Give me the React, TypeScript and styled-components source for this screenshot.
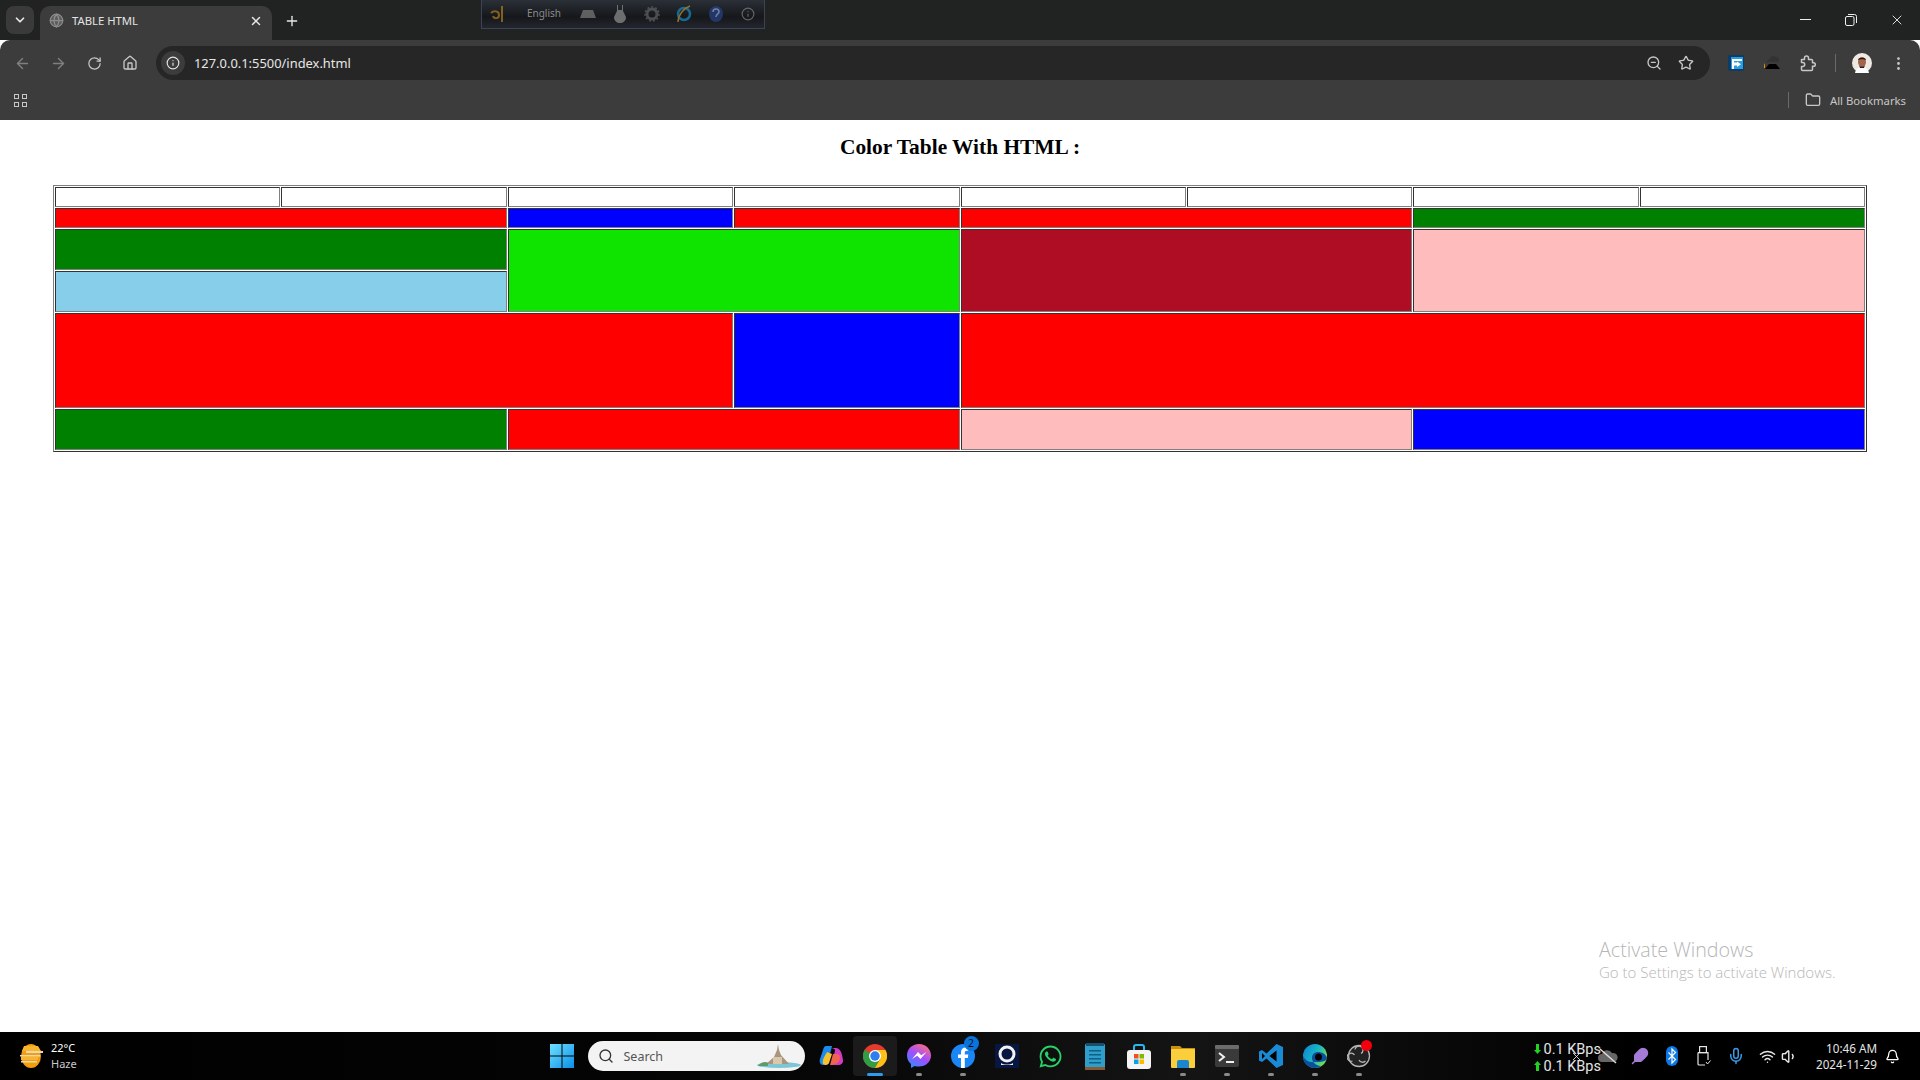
import React from "react";
import styled, { createGlobalStyle } from "styled-components";
import {
  ArrowLeft,
  ArrowRight,
  Bell,
  ChevronDown,
  Feather,
  Folder,
  Globe,
  Home,
  Info,
  Mic,
  MoreVertical,
  Plus,
  RotateCw,
  Search,
  Star,
  Volume1,
  Wifi,
  X,
  ZoomOut,
} from "lucide-react";
import { FaWhatsapp } from "react-icons/fa";

const GlobalStyle = createGlobalStyle`
  html, body {
    margin: 0;
    padding: 0;
    background: #fff;
  }
  * {
    box-sizing: border-box;
  }
`;

const Screen = styled.div`
  width: 1920px;
  height: 1080px;
  display: flex;
  flex-direction: column;
  overflow: hidden;
  position: relative;
  font-family: "Noto Sans", "Open Sans", sans-serif;
`;

/* browser window */
const TabStrip = styled.div`
  height: 40px;
  flex: none;
  background: #212322;
  display: flex;
  align-items: flex-end;
  padding-left: 6px;
  color: #e8e8e8;
`;
const TabMenu = styled.div`
  width: 28px;
  height: 28px;
  margin-bottom: 6px;
  border-radius: 8px;
  background: #3a3a3a;
  display: flex;
  align-items: center;
  justify-content: center;
`;
const Tab = styled.div`
  width: 232px;
  height: 34px;
  margin-left: 6px;
  padding: 0 9px 5px 9px;
  border-radius: 10px 10px 0 0;
  background: #3c3c3c;
  display: flex;
  align-items: center;
  gap: 8px;
`;
const TabTitle = styled.span`
  flex: 1;
  font-size: 11.3px;
  color: #e3e3e3;
`;
const NewTab = styled.div`
  width: 38px;
  height: 34px;
  margin-left: 1px;
  padding-bottom: 5px;
  display: flex;
  align-items: center;
  justify-content: center;
`;
const WindowButtons = styled.div`
  margin-left: auto;
  height: 40px;
  display: flex;
  align-items: center;
`;
const WindowButton = styled.div`
  width: 46px;
  height: 40px;
  display: flex;
  align-items: center;
  justify-content: center;
`;

const ImeBar = styled.div`
  position: absolute;
  left: 481px;
  top: 0;
  width: 284px;
  height: 29px;
  background: linear-gradient(#2b3038, #15171a 60%, #23262e);
  border: 1px solid #3c4354;
  border-top: none;
  display: flex;
  align-items: center;
  color: #8b8b8b;
`;
const ImeLang = styled.span`
  font-size: 10px;
  width: 44px;
  text-align: center;
  margin: -3px 6px 0 8px;
`;
const ImeIcon = styled.span`
  width: 32px;
  display: flex;
  justify-content: center;
  opacity: 0.75;
`;

const Toolbar = styled.div`
  height: 48px;
  flex: none;
  background: #3c3c3c;
  border-radius: 10px 10px 0 0;
  display: flex;
  align-items: center;
  padding: 0 0 2px 4px;
  color: #c7c7c7;
`;
const NavButton = styled.div<{ $dim?: boolean }>`
  width: 36px;
  display: flex;
  justify-content: center;
  color: ${({ $dim }) => ($dim ? "#7f7f7f" : "#c7c7c7")};
`;
const AddressBar = styled.div`
  width: 1554px;
  height: 34px;
  margin-left: 8px;
  border-radius: 17px;
  background: #262626;
  display: flex;
  align-items: center;
  padding: 0 8px 0 5px;
`;
const InfoChip = styled.div`
  width: 24px;
  height: 24px;
  border-radius: 50%;
  background: #3c3c3c;
  display: flex;
  align-items: center;
  justify-content: center;
  color: #e3e3e3;
`;
const Url = styled.span`
  flex: 1;
  margin-left: 9px;
  font-size: 12.9px;
  color: #e6e6e6;
`;
const AddressAction = styled.div`
  width: 32px;
  display: flex;
  justify-content: center;
`;
const ExtensionRow = styled.div`
  display: flex;
  align-items: center;
  margin-left: 8px;
`;
const ExtensionButton = styled.div<{ $gap?: number }>`
  width: 36px;
  margin-left: ${({ $gap }) => $gap || 0}px;
  display: flex;
  justify-content: center;
`;
const Divider = styled.div<{ $h: number; $gap?: number }>`
  width: 1px;
  height: ${({ $h }) => $h}px;
  margin-left: ${({ $gap }) => $gap || 0}px;
  background: #6a6a6a;
`;

const BookmarksBar = styled.div`
  height: 32px;
  flex: none;
  background: #3c3c3c;
  display: flex;
  align-items: center;
  padding: 0 14px 8px 12px;
  color: #c7c7c7;
`;
const AppsIcon = styled.div`
  display: grid;
  grid-template-columns: 5px 5px;
  gap: 3px;
  margin-left: 2px;
`;
const AppsDot = styled.span`
  width: 5px;
  height: 5px;
  border: 1px solid #c7c7c7;
`;
const BookmarksEnd = styled.div`
  margin-left: auto;
  display: flex;
  align-items: center;
  gap: 16px;
`;
const BookmarkFolder = styled.div`
  display: flex;
  align-items: center;
  gap: 9px;
`;
const BookmarksLabel = styled.span`
  font-size: 11.3px;
  color: #c7c7c7;
`;

/* page */
const Page = styled.main`
  flex: 1;
  background: #fff;
  padding: 16px 53px 0;
  position: relative;
`;
const Heading = styled.h2`
  margin: 0 0 27px;
  height: 22px;
  line-height: 22px;
  text-align: center;
  font-family: "Liberation Serif", "Times New Roman", serif;
  font-size: 21.4px;
  font-weight: bold;
  color: #000;
`;
const ColorTable = styled.table`
  width: 1814px;
  table-layout: fixed;
  border-collapse: separate;
  border-spacing: 1px;
  border: 1px solid;
  border-color: #808080 #333 #333 #808080;
`;
const Row = styled.tr<{ $h: number }>`
  height: ${({ $h }) => $h}px;
`;
const Cell = styled.td<{ $bg?: string }>`
  padding: 0;
  border: 1px solid;
  border-color: #333 #808080 #808080 #333;
  background: ${({ $bg }) => $bg || "#fff"};
`;
const Watermark = styled.div`
  position: absolute;
  left: 1599px;
  top: 817px;
  font-family: "Open Sans", sans-serif;
  font-weight: 300;
  color: #b6b6b6;
`;
const WatermarkTitle = styled.div`
  font-size: 19.7px;
  line-height: 26px;
`;
const WatermarkText = styled.div`
  font-size: 15px;
  line-height: 19px;
  white-space: nowrap;
`;

/* taskbar */
const Taskbar = styled.footer`
  height: 48px;
  flex: none;
  background: linear-gradient(90deg, #000 0%, #050505 40%, #141414 62%, #000 85%);
  display: grid;
  grid-template-columns: 1fr auto 1fr;
  align-items: center;
  color: #fff;
`;
const Weather = styled.div`
  display: flex;
  align-items: center;
  padding-left: 18px;
  gap: 7px;
`;
const WeatherText = styled.div`
  font-size: 11px;
  line-height: 16px;
`;
const WeatherSub = styled.div`
  color: #c9c9c9;
`;
const TaskCenter = styled.div`
  display: flex;
  align-items: center;
`;
const SearchBox = styled.div`
  width: 217px;
  height: 30px;
  margin: 0 4px;
  border-radius: 15px;
  background: #f3f3f3;
  color: #333;
  display: flex;
  align-items: center;
  padding: 0 3px 0 10px;
  gap: 10px;
`;
const SearchLabel = styled.span`
  flex: 1;
  font-size: 12.5px;
  color: #555;
`;
const TaskIcon = styled.div<{ $active?: boolean; $dot?: boolean }>`
  width: 44px;
  height: 40px;
  border-radius: 4px;
  position: relative;
  display: flex;
  align-items: center;
  justify-content: center;
  background: ${({ $active }) => ($active ? "#1b1b1b" : "transparent")};
  &::after {
    content: "";
    display: ${({ $dot, $active }) => ($dot || $active ? "block" : "none")};
    position: absolute;
    bottom: 0;
    left: 50%;
    transform: translateX(-50%);
    width: ${({ $active }) => ($active ? 16 : 6)}px;
    height: 3px;
    border-radius: 2px;
    background: ${({ $active }) => ($active ? "#2f9bf0" : "#8a8a8a")};
  }
`;
const CountBadge = styled.span`
  position: absolute;
  top: 0;
  right: 6px;
  width: 15px;
  height: 15px;
  border-radius: 50%;
  background: #0a74dc;
  color: #111;
  font-size: 10.5px;
  line-height: 15px;
  text-align: center;
`;
const RecordDot = styled.span`
  position: absolute;
  top: 4px;
  right: 9px;
  width: 11px;
  height: 11px;
  border-radius: 50%;
  background: #f4000c;
`;
const Tray = styled.div`
  display: flex;
  align-items: center;
  justify-content: flex-end;
`;
const NetSpeed = styled.div`
  position: relative;
  display: flex;
  flex-direction: column;
  padding-top: 3px;
  font-family: Roboto, sans-serif;
  font-size: 14.5px;
  line-height: 17px;
  color: #e4e4e4;
  margin-right: -9px;
`;
const NetLine = styled.div`
  display: flex;
  align-items: center;
  gap: 3px;
  white-space: nowrap;
`;
const NetCursor = styled.span`
  position: absolute;
  left: 36px;
  top: 12px;
  display: flex;
  color: #f2f2f2;
`;
const TrayIcon = styled.div<{ $w?: number; $color?: string }>`
  width: ${({ $w }) => $w || 32}px;
  display: flex;
  justify-content: center;
  color: ${({ $color }) => $color || "#e6e6e6"};
  & > svg {
    flex: none;
  }
`;
const Clock = styled.div`
  font-size: 11.7px;
  line-height: 16px;
  text-align: right;
  color: #e6e6e6;
  margin-left: 20px;
`;
const BellWrap = styled.div`
  width: 30px;
  margin-right: 13px;
  display: flex;
  justify-content: center;
`;

const Arrow = ({ up }: { up?: boolean }) => (
  <svg width="7" height="10" viewBox="0 0 7 10">
    <path
      d={up ? "M3.5 0 7 4H5v6H2V4H0z" : "M3.5 10 7 6H5V0H2v6H0z"}
      fill="#1fd31f"
    />
  </svg>
);

const Restore = () => (
  <svg width="12" height="12" viewBox="0 0 12 12" fill="none" stroke="#eee">
    <rect x="0.5" y="2.5" width="8.5" height="9" rx="1.5" />
    <path d="M3 .5h6.5a2 2 0 0 1 2 2V9" />
  </svg>
);

const MinimizeIcon = () => (
  <svg width="11" height="2" viewBox="0 0 11 2">
    <rect width="11" height="1" fill="#eee" />
  </svg>
);

const ForwardExt = () => (
  <svg width="16" height="16" viewBox="0 0 16 16">
    <rect width="16" height="16" rx="2" fill="#0d3c66" />
    <rect x="3" y="2" width="12" height="12" fill="#2a9ee0" />
    <path d="M4 4h10v2H6v1.5h3v-1l4 2.8-4 2.8v-1.6H6V14H4z" fill="#fff" />
  </svg>
);

const CapExt = () => (
  <svg width="16" height="16" viewBox="0 0 16 16">
    <path d="M1 8 8 1l7 2v4H1z" fill="#333" />
    <path d="M0 8v5h1v-3z" fill="#f08a00" />
    <path d="M1 14 5 9h7l4 5z" fill="#000" />
  </svg>
);

const ExtensionsIcon = () => (
  <svg width="17" height="17" viewBox="0 0 17 17" fill="none" stroke="#c7c7c7" strokeWidth="1.500" strokeLinejoin="round">
    <path d="M1.500 4.500h3V3a2 2 0 0 1 4 0v1.500h3a1 1 0 0 1 1 1v2.200h1a1.800 1.800 0 0 1 0 3.600h-1v3.200a1 1 0 0 1-1 1h-9a1 1 0 0 1-1-1v-3h1.200a2 2 0 0 0 0-4H1.500z" />
  </svg>
);

const Avatar = () => (
  <svg width="20" height="20" viewBox="0 0 20 20">
    <circle cx="10" cy="10" r="10" fill="#efe9e4" />
    <path d="M3 20c1-5 4-6 7-6s6 1 7 6z" fill="#fff" />
    <ellipse cx="10" cy="9" rx="4" ry="5" fill="#a5654c" />
    <path d="M6 7c0-3 8-3 8 0-2-1-6-1-8 0z" fill="#231815" />
    <path d="M7 12c1 2 5 2 6 0l-1 3H8z" fill="#2c1d18" />
  </svg>
);

const WeatherIcon = () => (
  <svg width="26" height="26" viewBox="0 0 26 26">
    <ellipse cx="13" cy="13" rx="10" ry="12" fill="#f59e0b" />
    <path d="M6 3h14l3 5H4zM3 14h17v3H3z" fill="#f7b42c" />
    <path d="M8 8h17v2H8zM2 12h20v1.500H2zM3 18h16v1.500H3z" fill="#ead8b4" />
  </svg>
);

const WindowsLogo = () => (
  <svg width="24" height="24" viewBox="0 0 24 24">
    <defs>
      <linearGradient id="win" x1="0" y1="0" x2="1" y2="1">
        <stop offset="0" stopColor="#6fe0ff" />
        <stop offset="1" stopColor="#0a8fe8" />
      </linearGradient>
    </defs>
    <path d="M0 0h11.500v11.500H0zM12.500 0H24v11.500H12.500zM0 12.500h11.500V24H0zM12.500 12.500H24V24H12.500z" fill="url(#win)" />
  </svg>
);

const SearchThumb = () => (
  <svg width="50" height="28" viewBox="0 0 50 28">
    <ellipse cx="27" cy="23" rx="22" ry="3" fill="#7cc7d3" />
    <path d="M14 22 22 15l3-7 1-6 1 6 2 5 8 9z" fill="#a9967e" />
    <path d="M6 24c3-4 7-5 10-3v3z" fill="#5f9a6a" />
    <path d="M21 15h9v7h-9z" fill="#d9c8ad" />
  </svg>
);

const CopilotIcon = () => (
  <svg width="24" height="24" viewBox="0 0 24 24">
    <path d="M7 2h6l-4 16c-.5 2-2 3-3.500 3H4c-2.500 0-4-3-3-6l3-9c.6-2 1.500-4 3-4z" fill="#1a8cf0" />
    <path d="M4 20c-1-5 2-8 4-12l5 2-3 9c-.5 1.500-3 3-6 1z" fill="#f6c22e" />
    <path d="M11 4h6c3 0 5 3 6 7l1 5c.5 3-2 5-4 5h-8l4-14c.3-1.500-1-3-5-3z" fill="#d13cc2" />
    <path d="M14 10h4c2 0 3 2 3 4 0 3-3 7-10 7z" fill="#f0634f" />
  </svg>
);

const ChromeIcon = () => (
  <svg width="24" height="24" viewBox="0 0 24 24">
    <circle cx="12" cy="12" r="12" fill="#e33b2e" />
    <path d="M1.600 6A12 12 0 0 0 12 24l5.200-9L12 12z" fill="#2f9e44" />
    <path d="M22.400 6A12 12 0 0 1 12 24l5.200-9L12 6z" fill="#fbc116" />
    <circle cx="12" cy="12" r="6" fill="#fff" />
    <circle cx="12" cy="12" r="4.700" fill="#2f7df0" />
  </svg>
);

const MessengerIcon = () => (
  <svg width="24" height="24" viewBox="0 0 24 24">
    <defs>
      <linearGradient id="msg" x1="0.2" y1="1" x2="0.8" y2="0">
        <stop offset="0" stopColor="#2f8cff" />
        <stop offset="0.5" stopColor="#a24dff" />
        <stop offset="1" stopColor="#ff6f7d" />
      </linearGradient>
    </defs>
    <path d="M12 0C5 0 0 5 0 11.500c0 3.500 1.500 6.500 4 8.500v4l3.700-2c1.300.4 2.800.6 4.300.6 7 0 12-5 12-11.100S19 0 12 0z" fill="url(#msg)" />
    <path d="m5 15 6-7 3.200 3.200L19.500 8l-6 7-3.300-3.200z" fill="#fff" />
  </svg>
);

const FacebookIcon = () => (
  <svg width="24" height="24" viewBox="0 0 24 24">
    <circle cx="12" cy="12" r="12" fill="#1b86f5" />
    <path d="M13.800 24V14h3l.5-3.500h-3.500V8.500c0-1 .5-1.800 2-1.800h1.600V3.600c-1-.1-1.800-.2-2.700-.2-2.900 0-4.700 1.700-4.700 4.800v2.300H7V14h3v10z" fill="#fff" />
  </svg>
);

const CamIcon = () => (
  <svg width="24" height="24" viewBox="0 0 24 24">
    <rect width="24" height="24" fill="#071742" />
    <circle cx="12" cy="10" r="7" fill="none" stroke="#f3f3f3" strokeWidth="3" />
    <path d="M6 19c3 2 9 2 12 0v2H6z" fill="#e6e6e6" />
  </svg>
);

const NotepadIcon = () => (
  <svg width="20" height="27" viewBox="0 0 20 27">
    <rect y="1" width="20" height="26" rx="1" fill="#2f9ecb" />
    <rect y="24" width="20" height="3" fill="#8a5a34" />
    <path d="M1 0h18v3H1z" fill="#16506e" />
    <path d="M4 7h12v1.500H4zM4 11h12v1.500H4zM4 15h12v1.500H4zM4 19h12v1.500H4z" fill="#0f5f86" />
  </svg>
);

const StoreIcon = () => (
  <svg width="24" height="26" viewBox="0 0 24 26">
    <path d="M7 8V4a2 2 0 0 1 2-2h6a2 2 0 0 1 2 2v4" fill="none" stroke="#29b6f0" strokeWidth="2" />
    <rect y="7" width="24" height="19" rx="3" fill="#f4f4f4" />
    <rect x="7" y="11" width="4.500" height="4.500" fill="#f25022" />
    <rect x="12.500" y="11" width="4.500" height="4.500" fill="#7fba00" />
    <rect x="7" y="16.500" width="4.500" height="4.500" fill="#00a4ef" />
    <rect x="12.500" y="16.500" width="4.500" height="4.500" fill="#ffb900" />
  </svg>
);

const ExplorerIcon = () => (
  <svg width="24" height="24" viewBox="0 0 24 24">
    <path d="M0 2h9l2 2h13v4H0z" fill="#c98f10" />
    <rect y="5" width="24" height="19" rx="1" fill="#fbcf3c" />
    <path d="M6 24v-6a2 2 0 0 1 2-2h8a2 2 0 0 1 2 2v6z" fill="#1a86d0" />
  </svg>
);

const TerminalIcon = () => (
  <svg width="24" height="22" viewBox="0 0 24 22">
    <rect width="24" height="22" rx="2" fill="#3a3a3a" />
    <rect width="24" height="4" rx="1" fill="#6b6b6b" />
    <path d="m4 8 5 4-5 4" fill="none" stroke="#f2f2f2" strokeWidth="2" />
    <rect x="11" y="16" width="8" height="2" fill="#f2f2f2" />
  </svg>
);

const VsCodeIcon = () => (
  <svg width="24" height="24" viewBox="0 0 24 24">
    <path d="M17.500 0 24 3v18l-6.500 3-10-9.500L3 18l-3-1.500v-9L3 6l4.500 3.500z" fill="#1a8ad4" />
    <path d="M17.500 6.500 10.500 12l7 5.500zM3 9v6l3-3z" fill="#000" />
  </svg>
);

const EdgeIcon = () => (
  <svg width="24" height="24" viewBox="0 0 24 24">
    <defs>
      <linearGradient id="edge" x1="0" y1="0" x2="1" y2="0.500">
        <stop offset="0" stopColor="#0c82d8" />
        <stop offset="0.600" stopColor="#19b6c4" />
        <stop offset="1" stopColor="#6fdc58" />
      </linearGradient>
    </defs>
    <circle cx="12" cy="12" r="12" fill="url(#edge)" />
    <path d="M24 14c-1-4-5-6-9-6-3 0-6 2-6 6 0 4 4 8 9 8-2 1-4 2-6 2C5 24 0 19 0 12c2 4 5 6 9 6h6c4 0 9-1 9-4z" fill="#0c4f9c" />
    <circle cx="15.500" cy="13" r="3.500" fill="#000" />
  </svg>
);

const ObsIcon = () => (
  <svg width="24" height="24" viewBox="0 0 24 24" fill="none" stroke="#b5b5b5" strokeWidth="1.300">
    <circle cx="12" cy="12" r="10.500" fill="#222" />
    <path d="M8 5.500a4 4 0 1 1 6 4M5.500 17a4 4 0 1 1 2-6M18.500 17a4 4 0 0 1-6.500-1" />
  </svg>
);

const CloudOff = () => (
  <svg width="20" height="16" viewBox="0 0 20 16">
    <path d="M4 14a4 4 0 0 1 0-8 5.500 5.500 0 0 1 10-1 4.500 4.500 0 0 1 2 9z" fill="#666" />
    <path d="M2 1 18 15" stroke="#ddd" strokeWidth="1.500" />
  </svg>
);

const BluetoothIcon = () => (
  <svg width="12" height="20" viewBox="0 0 12 20">
    <rect width="12" height="20" rx="6" fill="#0a78e6" />
    <path d="m2.500 6.500 7 7L6 17V3l3.500 3.500-7 7" fill="none" stroke="#fff" strokeWidth="1.200" />
  </svg>
);

const DriveIcon = () => (
  <svg width="14" height="20" viewBox="0 0 14 20" fill="none" stroke="#e6e6e6" strokeWidth="1.200">
    <rect x="2.600" y="0.600" width="6.800" height="6" />
    <path d="M1 6.600h10V14M1 6.600V18a1 1 0 0 0 1 1h6" />
    <path d="m9 16 1.500 2 3-3.500" strokeWidth="1" />
  </svg>
);

const taskApps = [
  { key: "copilot", icon: <CopilotIcon /> },
  { key: "chrome", icon: <ChromeIcon />, active: true },
  { key: "messenger", icon: <MessengerIcon />, dot: true },
  { key: "facebook", icon: <FacebookIcon />, dot: true, badge: "2" },
  { key: "cam", icon: <CamIcon /> },
  { key: "whatsapp", icon: <FaWhatsapp size={25} color="#25d366" /> },
  { key: "notepad", icon: <NotepadIcon /> },
  { key: "store", icon: <StoreIcon /> },
  { key: "explorer", icon: <ExplorerIcon />, dot: true },
  { key: "terminal", icon: <TerminalIcon />, dot: true },
  { key: "vscode", icon: <VsCodeIcon />, dot: true },
  { key: "edge", icon: <EdgeIcon />, dot: true },
  { key: "obs", icon: <ObsIcon />, dot: true, record: true },
];

const RED = "#ff0000";
const BLUE = "#0000ff";
const GREEN = "#008000";
const LIME = "#0fe400";
const CRIMSON = "#ae0d23";
const PINK = "#ffbcbc";
const SKY = "#87ceeb";

export default function App() {
  return (
    <Screen>
      <GlobalStyle />
      <TabStrip>
        <TabMenu>
          <ChevronDown size={14} strokeWidth={3} />
        </TabMenu>
        <Tab>
          <Globe size={15} color="#8c8c8c" fill="#5c5c5c" />
          <TabTitle>TABLE HTML</TabTitle>
          <X size={14} strokeWidth={2.5} />
        </Tab>
        <NewTab>
          <Plus size={16} strokeWidth={2} />
        </NewTab>
        <WindowButtons>
          <WindowButton>
            <MinimizeIcon />
          </WindowButton>
          <WindowButton>
            <Restore />
          </WindowButton>
          <WindowButton>
            <X size={16} strokeWidth={1.4} />
          </WindowButton>
        </WindowButtons>
      </TabStrip>
      <ImeBar>
        <ImeIcon>
          <svg width="16" height="18" viewBox="0 0 16 18" fill="none" stroke="#a5791f" strokeWidth="2">
            <path d="M1 8c3-3 8-2 8 2s-5 4-6 1M12 1v16" />
          </svg>
        </ImeIcon>
        <ImeLang>English</ImeLang>
        <ImeIcon>
          <svg width="16" height="8" viewBox="0 0 16 8">
            <path d="M3 0h10l3 8H0z" fill="#777" />
          </svg>
        </ImeIcon>
        <ImeIcon>
          <svg width="12" height="18" viewBox="0 0 12 18">
            <path d="M3 0h1v5h4V0h1v6l3 6c0 4-3 6-6 6s-6-2-6-6l3-6z" fill="#8a8a8a" />
          </svg>
        </ImeIcon>
        <ImeIcon>
          <svg width="16" height="16" viewBox="0 0 16 16" fill="none" stroke="#5f5f5f">
            <circle cx="8" cy="8" r="5" strokeWidth="3" />
            <circle cx="8" cy="8" r="7" strokeWidth="1.500" strokeDasharray="2 2" />
          </svg>
        </ImeIcon>
        <ImeIcon>
          <svg width="16" height="18" viewBox="0 0 16 18" fill="none">
            <ellipse cx="8" cy="9" rx="6" ry="6" stroke="#1684b8" strokeWidth="2.500" />
            <path d="M14 1C8 3 2 10 2 17" stroke="#b9902c" strokeWidth="1.500" />
          </svg>
        </ImeIcon>
        <ImeIcon>
          <svg width="16" height="18" viewBox="0 0 16 18">
            <ellipse cx="8" cy="9" rx="7" ry="8" fill="#27407f" />
            <path d="M5 7c0-4 6-4 6 0 0 2-3 2-3 5" fill="none" stroke="#8ea2d6" strokeWidth="1.500" />
          </svg>
        </ImeIcon>
        <ImeIcon>
          <Info size={14} color="#7d7d7d" />
        </ImeIcon>
      </ImeBar>
      <Toolbar>
        <NavButton $dim>
          <ArrowLeft size={17} />
        </NavButton>
        <NavButton $dim>
          <ArrowRight size={17} />
        </NavButton>
        <NavButton>
          <RotateCw size={15} />
        </NavButton>
        <NavButton>
          <Home size={16} />
        </NavButton>
        <AddressBar>
          <InfoChip>
            <Info size={14} />
          </InfoChip>
          <Url>127.0.0.1:5500/index.html</Url>
          <AddressAction>
            <ZoomOut size={16} />
          </AddressAction>
          <AddressAction>
            <Star size={16} />
          </AddressAction>
        </AddressBar>
        <ExtensionRow>
          <ExtensionButton>
            <ForwardExt />
          </ExtensionButton>
          <ExtensionButton>
            <CapExt />
          </ExtensionButton>
          <ExtensionButton>
            <ExtensionsIcon />
          </ExtensionButton>
          <Divider $h={18} $gap={9} />
          <ExtensionButton $gap={8}>
            <Avatar />
          </ExtensionButton>
          <ExtensionButton>
            <MoreVertical size={17} />
          </ExtensionButton>
        </ExtensionRow>
      </Toolbar>
      <BookmarksBar>
        <AppsIcon>
          <AppsDot />
          <AppsDot />
          <AppsDot />
          <AppsDot />
        </AppsIcon>
        <BookmarksEnd>
          <Divider $h={16} />
          <BookmarkFolder>
            <Folder size={16} />
            <BookmarksLabel>All Bookmarks</BookmarksLabel>
          </BookmarkFolder>
        </BookmarksEnd>
      </BookmarksBar>

      <Page>
        <Heading>Color Table With HTML :</Heading>
        <ColorTable>
          <tbody>
            <Row $h={20}>
              {Array.from({ length: 8 }).map((_, i) => (
                <Cell key={i} />
              ))}
            </Row>
            <Row $h={20}>
              <Cell colSpan={2} $bg={RED} />
              <Cell $bg={BLUE} />
              <Cell $bg={RED} />
              <Cell colSpan={2} $bg={RED} />
              <Cell colSpan={2} $bg={GREEN} />
            </Row>
            <Row $h={41}>
              <Cell colSpan={2} $bg={GREEN} />
              <Cell colSpan={2} rowSpan={2} $bg={LIME} />
              <Cell colSpan={2} rowSpan={2} $bg={CRIMSON} />
              <Cell colSpan={2} rowSpan={2} $bg={PINK} />
            </Row>
            <Row $h={41}>
              <Cell colSpan={2} $bg={SKY} />
            </Row>
            <Row $h={95}>
              <Cell colSpan={3} $bg={RED} />
              <Cell $bg={BLUE} />
              <Cell colSpan={4} $bg={RED} />
            </Row>
            <Row $h={41}>
              <Cell colSpan={2} $bg={GREEN} />
              <Cell colSpan={2} $bg={RED} />
              <Cell colSpan={2} $bg={PINK} />
              <Cell colSpan={2} $bg={BLUE} />
            </Row>
          </tbody>
        </ColorTable>
        <Watermark>
          <WatermarkTitle>Activate Windows</WatermarkTitle>
          <WatermarkText>Go to Settings to activate Windows.</WatermarkText>
        </Watermark>
      </Page>

      <Taskbar>
        <Weather>
          <WeatherIcon />
          <WeatherText>
            <div>22°C</div>
            <WeatherSub>Haze</WeatherSub>
          </WeatherText>
        </Weather>
        <TaskCenter>
          <TaskIcon>
            <WindowsLogo />
          </TaskIcon>
          <SearchBox>
            <Search size={16} />
            <SearchLabel>Search</SearchLabel>
            <SearchThumb />
          </SearchBox>
          {taskApps.map((app) => (
            <TaskIcon key={app.key} $active={app.active} $dot={app.dot}>
              {app.icon}
              {app.badge && <CountBadge>{app.badge}</CountBadge>}
              {app.record && <RecordDot />}
            </TaskIcon>
          ))}
        </TaskCenter>
        <Tray>
          <NetSpeed>
            <NetLine>
              <Arrow />
              0.1 KBps
            </NetLine>
            <NetLine>
              <Arrow up />
              0.1 KBps
            </NetLine>
            <NetCursor>
              <X size={13} strokeWidth={1.5} />
            </NetCursor>
          </NetSpeed>
          <TrayIcon>
            <CloudOff />
          </TrayIcon>
          <TrayIcon $color="#a47cd8">
            <Feather size={18} fill="#a47cd8" />
          </TrayIcon>
          <TrayIcon>
            <BluetoothIcon />
          </TrayIcon>
          <TrayIcon>
            <DriveIcon />
          </TrayIcon>
          <TrayIcon $color="#3b9be8">
            <Mic size={18} />
          </TrayIcon>
          <TrayIcon>
            <Wifi size={17} />
          </TrayIcon>
          <TrayIcon $w={12}>
            <Volume1 size={17} />
          </TrayIcon>
          <Clock>
            10:46 AM
            <br />
            2024-11-29
          </Clock>
          <BellWrap>
            <Bell size={15} />
          </BellWrap>
        </Tray>
      </Taskbar>
    </Screen>
  );
}
